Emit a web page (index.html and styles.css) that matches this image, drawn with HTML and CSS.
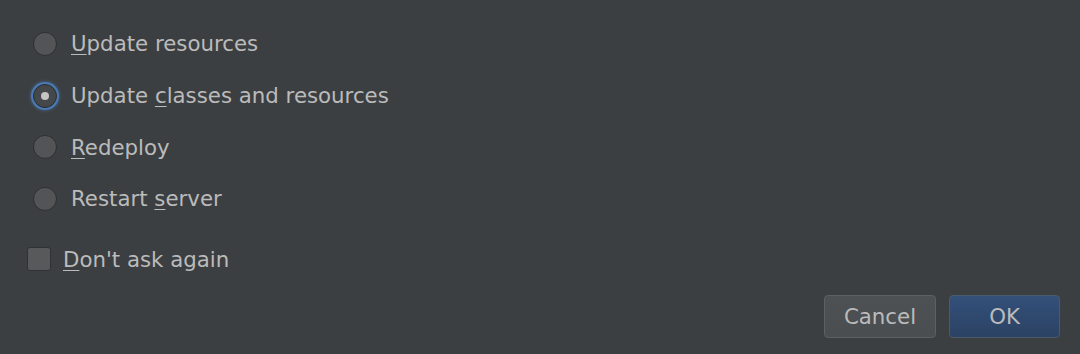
FILE: index.html
```html
<!DOCTYPE html>
<html>
<head>
<meta charset="utf-8">
<link rel="stylesheet" href="styles.css">
</head>
<body>
<div class="dialog">
  <div class="options">
    <div class="radio-row"><span class="radio"></span><span class="label"><u>U</u>pdate resources</span></div>
    <div class="radio-row"><span class="radio selected"><span class="dot"></span></span><span class="label">Update <u>c</u>lasses and resources</span></div>
    <div class="radio-row"><span class="radio"></span><span class="label"><u>R</u>edeploy</span></div>
    <div class="radio-row"><span class="radio"></span><span class="label">Restart <u>s</u>erver</span></div>
  </div>
  <div class="check-row"><span class="checkbox"></span><span class="label"><u>D</u>on't ask again</span></div>
  <div class="buttons">
    <button class="btn">Cancel</button>
    <button class="btn primary">OK</button>
  </div>
</div>
</body>
</html>
```

FILE: styles.css
```css
html, body {
  margin: 0;
  padding: 0;
  background: #3c3f41;
}
.dialog {
  width: 1080px;
  height: 354px;
  box-sizing: border-box;
  padding: 18px 20px 16px 27px;
  display: flex;
  flex-direction: column;
  font-family: "DejaVu Sans", "Liberation Sans", sans-serif;
  font-size: 21.3px;
  color: #bbbbbb;
}
.options {
  display: flex;
  flex-direction: column;
  padding-left: 6px;
}
.radio-row {
  height: 51.7px;
  display: flex;
  align-items: center;
}
.radio {
  width: 24px;
  height: 24px;
  box-sizing: border-box;
  border-radius: 50%;
  background: #525456;
  border: 1px solid #2c2e30;
  box-shadow: inset 0 1px 0 rgba(255,255,255,0.04);
  margin-right: 14px;
  display: flex;
  align-items: center;
  justify-content: center;
  flex-shrink: 0;
}
.radio.selected {
  background: #45484a;
  border: 1px solid #2b2d2f;
  box-shadow: 0 0 0 2px #4a7ab4, 0 0 3px 3px rgba(74,122,180,0.45);
}
.dot {
  width: 8px;
  height: 8px;
  border-radius: 50%;
  background: #c4c4c4;
}
.label u {
  text-decoration-thickness: 1px;
  text-underline-offset: 3px;
}
.check-row {
  margin-top: 12px;
  height: 45px;
  display: flex;
  align-items: center;
}
.checkbox {
  width: 24px;
  height: 24px;
  box-sizing: border-box;
  border-radius: 3px;
  background: #57595b;
  border: 1px solid #2f3133;
  margin-right: 12px;
  flex-shrink: 0;
}
.buttons {
  margin-top: auto;
  display: flex;
  justify-content: flex-end;
  gap: 13px;
}
.btn {
  width: 112px;
  height: 43px;
  border-radius: 4px;
  border: 1px solid #5c6062;
  background: linear-gradient(#4d5153, #4a4e50);
  color: #bbbbbb;
  font-family: "DejaVu Sans", "Liberation Sans", sans-serif;
  font-size: 21.3px;
  padding: 0;
}
.btn.primary {
  width: 111px;
  border-color: #4b5a6c;
  background: linear-gradient(#33507a, #2b4263);
}
```
